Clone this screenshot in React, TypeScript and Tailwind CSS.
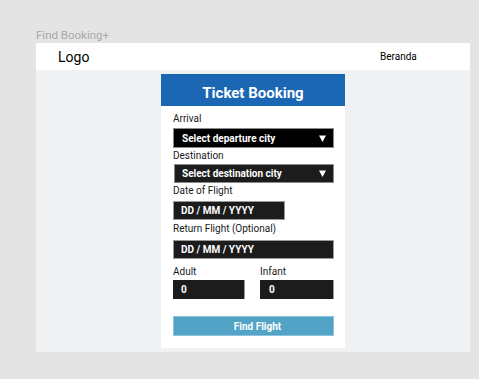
import React from "react";

const Caret = () => (
  <svg width="7" height="7" viewBox="0 0 7 7" className="shrink-0">
    <path d="M0 0.5 H7 L3.5 7 Z" fill="#ffffff" />
  </svg>
);

export default function App() {
  return (
    <div
      className="w-[479px] h-[379px] bg-[#e4e4e4] pt-[28px] pl-[36px]"
      style={{ fontFamily: "Roboto, 'Liberation Sans', sans-serif" }}
    >
      <div className="h-[15px] text-[11.5px] leading-[15px] text-[#a9a9a9]">Find Booking+</div>
      <div className="w-[434px] h-[309px] bg-[#f0f1f3] flex flex-col">
        <div className="h-[27px] bg-white flex items-center shrink-0">
          <div className="pl-[22px] w-[344px] text-[14px] text-black leading-none">Logo</div>
          <div className="text-[10px] text-black leading-none">Beranda</div>
        </div>
        <div className="flex justify-center pt-[4px]">
          <div className="w-[184px] h-[274px] bg-white flex flex-col">
            <div className="h-[32px] bg-[#1b67b3] flex items-end justify-center pb-[4px]">
              <span className="text-white font-bold text-[15px] leading-[18px]">Ticket Booking</span>
            </div>
            <div className="pl-[12px] pr-[11px] pt-[7px] flex flex-col text-[10px] text-[#1a1a1a]">
              <div className="leading-[12px]">Arrival</div>
              <div className="mt-[3px] h-[20px] bg-black border border-[#8a8a8a] flex items-center justify-between pl-[8px] pr-[7px]">
                <span className="text-white font-bold text-[10px]">Select departure city</span>
                <Caret />
              </div>
              <div className="mt-[2px] leading-[12px]">Destination</div>
              <div className="mt-[2px] ml-[1px] h-[19px] bg-[#1c1c1c] border border-[#8a8a8a] flex items-center justify-between pl-[7px] pr-[7px]">
                <span className="text-white font-bold text-[10px]">Select destination city</span>
                <Caret />
              </div>
              <div className="mt-[2px] leading-[12px]">Date of Flight</div>
              <div className="mt-[4px] w-[112px] h-[19px] bg-[#1c1c1c] border border-[#9a9a9a] flex items-center pl-[7px]">
                <span className="text-white font-bold text-[10px]">DD / MM / YYYY</span>
              </div>
              <div className="mt-[3px] leading-[12px]">Return Flight (Optional)</div>
              <div className="mt-[5px] h-[19px] bg-[#1c1c1c] border border-[#9a9a9a] flex items-center pl-[7px]">
                <span className="text-white font-bold text-[10px]">DD / MM / YYYY</span>
              </div>
              <div className="mt-[7px] flex">
                <div className="w-[88px] flex flex-col">
                  <div className="leading-[12px]">Adult</div>
                  <div className="mt-[2px] w-[72px] h-[19px] bg-[#1c1c1c] border-r border-[#9a9a9a] flex items-center pl-[8px]">
                    <span className="text-white font-bold text-[10px]">0</span>
                  </div>
                </div>
                <div className="flex flex-col">
                  <div className="leading-[12px]">Infant</div>
                  <div className="mt-[2px] w-[74px] h-[19px] bg-[#1c1c1c] border-r border-[#9a9a9a] flex items-center pl-[9px]">
                    <span className="text-white font-bold text-[10px]">0</span>
                  </div>
                </div>
              </div>
              <div className="mt-[17px] h-[20px] bg-[#52a3c6] border border-[#8cc3dc] flex items-center justify-center pl-[8px]">
                <span className="text-white font-bold text-[10px]">Find Flight</span>
              </div>
            </div>
          </div>
        </div>
      </div>
    </div>
  );
}
